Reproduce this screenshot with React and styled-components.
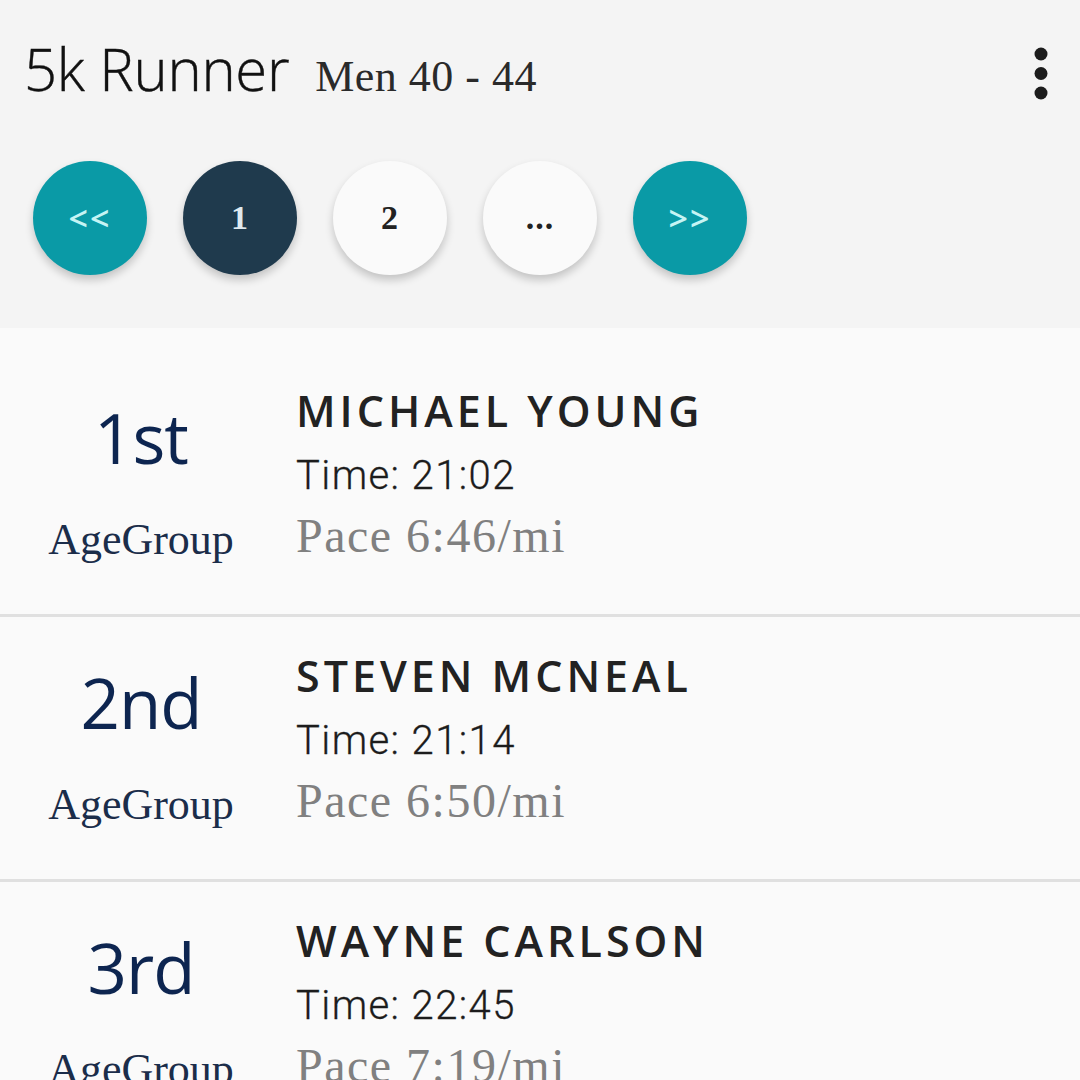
import React from 'react';
import styled, { createGlobalStyle } from 'styled-components';

const GlobalStyle = createGlobalStyle`
  html, body {
    margin: 0;
    padding: 0;
    background: #fafafa;
  }
  body {
    width: 1080px;
    height: 1080px;
    overflow: hidden;
  }
`;

const results = [
  { place: '1st', name: 'MICHAEL YOUNG', time: '21:02', pace: '6:46' },
  { place: '2nd', name: 'STEVEN MCNEAL', time: '21:14', pace: '6:50' },
  { place: '3rd', name: 'WAYNE CARLSON', time: '22:45', pace: '7:19' },
];

const pages = [
  { label: '<<', kind: 'nav' },
  { label: '1', kind: 'active' },
  { label: '2', kind: 'plain' },
  { label: '...', kind: 'plain' },
  { label: '>>', kind: 'nav' },
];

function Kebab() {
  return (
    <svg width='16' height='56' viewBox='0 0 16 56'>
      <circle cx='8' cy='8' r='6.5' fill='#1c1c1c' />
      <circle cx='8' cy='27.5' r='6.5' fill='#1c1c1c' />
      <circle cx='8' cy='47' r='6.5' fill='#1c1c1c' />
    </svg>
  );
}

export default function App() {
  return (
    <>
      <GlobalStyle />
      <Header>
        <TopBar>
          <Title>5k Runner</Title>
          <Division>Men 40 - 44</Division>
          <MenuButton>
            <Kebab />
          </MenuButton>
        </TopBar>
        <Pager>
          {pages.map((p, i) => (
            <PageButton key={i} kind={p.kind}>
              {p.label}
            </PageButton>
          ))}
        </Pager>
      </Header>

      <List>
        {results.map((r) => (
          <Row key={r.place}>
            <PlaceCol>
              <Place>{r.place}</Place>
              <PlaceLabel>AgeGroup</PlaceLabel>
            </PlaceCol>
            <Info>
              <Name>{r.name}</Name>
              <Time>Time: {r.time}</Time>
              <Pace>Pace {r.pace}/mi</Pace>
            </Info>
          </Row>
        ))}
      </List>
    </>
  );
}

const Header = styled.header`
  background: #f4f4f4;
  height: 328px;
  box-sizing: border-box;
`;

const TopBar = styled.div`
  display: flex;
  align-items: baseline;
  padding: 37px 0 0 24px;
  height: 122px;
  box-sizing: border-box;
  position: relative;
`;

const Title = styled.h1`
  margin: 0;
  font-family: 'Open Sans', sans-serif;
  font-weight: 300;
  font-size: 58px;
  line-height: 64px;
  color: #111;
  letter-spacing: -0.3px;
  -webkit-text-stroke: 0.4px #111;
`;

const Division = styled.span`
  margin-left: 26px;
  font-family: 'Liberation Serif', serif;
  font-size: 44px;
  letter-spacing: 0.5px;
  color: #2a2a2a;
`;

const MenuButton = styled.div`
  position: absolute;
  right: 31px;
  top: 46px;
  line-height: 0;
`;

const Pager = styled.nav`
  display: flex;
  gap: 36px;
  padding: 39px 0 0 33px;
`;

const PageButton = styled.div`
  width: 114px;
  height: 114px;
  border-radius: 50%;
  display: flex;
  align-items: center;
  justify-content: center;
  box-shadow: 0 5px 9px rgba(0, 0, 0, 0.2);
  background: ${(props) =>
    props.kind === 'nav' ? '#0a9aa6' : props.kind === 'active' ? '#1f3a4d' : '#fafafa'};
  color: ${(props) =>
    props.kind === 'nav' ? '#c6f4f4' : props.kind === 'active' ? '#dfe9ef' : '#222'};
  font-family: ${(props) =>
    props.kind === 'nav' ? "'Open Sans', sans-serif" : "'Liberation Serif', serif"};
  font-weight: ${(props) => (props.kind === 'nav' ? 600 : 700)};
  font-size: 34px;
  letter-spacing: ${(props) => (props.kind === 'nav' ? '2px' : '1px')};
`;

const List = styled.main`
  padding-top: 24px;
`;

const Row = styled.section`
  display: flex;
  height: 262px;
  border-bottom: 3px solid #e0e0e0;
  box-sizing: content-box;
`;

const PlaceCol = styled.div`
  width: 282px;
  display: flex;
  flex-direction: column;
  align-items: center;
  padding-top: 45px;
`;

const Place = styled.div`
  font-family: 'Open Sans', sans-serif;
  font-weight: 400;
  font-size: 69px;
  line-height: 80px;
  color: #0d2550;
  letter-spacing: -1px;
`;

const PlaceLabel = styled.div`
  margin-top: 38px;
  font-family: 'Liberation Serif', serif;
  font-size: 44px;
  line-height: 50px;
  color: #1b2d4a;
`;

const Info = styled.div`
  padding: 33px 0 0 14px;
  display: flex;
  flex-direction: column;
`;

const Name = styled.div`
  font-family: 'Open Sans', sans-serif;
  font-weight: 600;
  font-size: 43px;
  line-height: 52px;
  letter-spacing: 4px;
  color: #222;
`;

const Time = styled.div`
  margin-top: 13px;
  font-family: Roboto, sans-serif;
  font-weight: 300;
  font-size: 40px;
  line-height: 52px;
  letter-spacing: 1.4px;
  color: #1c1c1c;
  -webkit-text-stroke: 0.3px #1c1c1c;
`;

const Pace = styled.div`
  margin-top: 6px;
  font-family: 'Liberation Serif', serif;
  font-size: 48px;
  line-height: 56px;
  letter-spacing: 1.5px;
  color: #808080;
`;
